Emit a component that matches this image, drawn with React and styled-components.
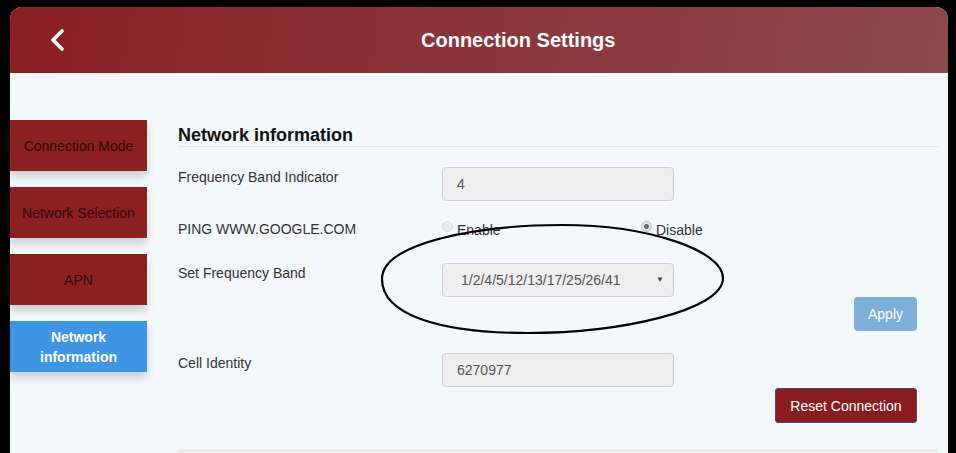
import React, { useState } from 'react';
import styled, { createGlobalStyle } from 'styled-components';

const GlobalStyle = createGlobalStyle`
  html, body {
    margin: 0;
    padding: 0;
    background: #000;
  }
  body {
    font-family: 'Liberation Sans', Arial, sans-serif;
  }
`;

const menu = [
  { id: 'mode', label: 'Connection Mode' },
  { id: 'selection', label: 'Network Selection' },
  { id: 'apn', label: 'APN' },
  { id: 'info', label: 'Network information' },
];

function App() {
  const [active, setActive] = useState('info');
  const [ping, setPing] = useState('disable');

  return (
    <>
      <GlobalStyle />
      <Frame>
        <Screen>
          <Header>
            <BackButton aria-label="Back">
              <svg width="18" height="24" viewBox="0 0 18 24">
                <polyline points="14,3 5,12 14,21" fill="none" stroke="#fff" strokeWidth="3.6" strokeLinecap="round" strokeLinejoin="round" />
              </svg>
            </BackButton>
            <Title>Connection Settings</Title>
          </Header>

          <Body>
            <Sidebar>
              {menu.map((item) => (
                <MenuButton key={item.id} $active={active === item.id} onClick={() => setActive(item.id)}>
                  {item.label}
                </MenuButton>
              ))}
            </Sidebar>

            <Main>
              <Heading>Network information</Heading>

              <Row $top={20}>
                <Label>Frequency Band Indicator</Label>
                <Field>4</Field>
              </Row>

              <Row $top={19}>
                <Label $pad={0}>PING WWW.GOOGLE.COM</Label>
                <RadioGroup>
                  <RadioItem onClick={() => setPing('enable')}>
                    <Radio $checked={ping === 'enable'} />
                    Enable
                  </RadioItem>
                  <RadioItem onClick={() => setPing('disable')}>
                    <Radio $checked={ping === 'disable'} />
                    Disable
                  </RadioItem>
                </RadioGroup>
              </Row>

              <Row $top={25}>
                <Label>Set Frequency Band</Label>
                <Field $select>
                  1/2/4/5/12/13/17/25/26/41
                  <Caret>▼</Caret>
                </Field>
              </Row>

              <ButtonRow>
                <ApplyButton>Apply</ApplyButton>
              </ButtonRow>

              <Row $top={22}>
                <Label>Cell Identity</Label>
                <Field>6270977</Field>
              </Row>

              <ButtonRow $top={1}>
                <ResetButton>Reset Connection</ResetButton>
              </ButtonRow>

              <NextSection />
            </Main>
          </Body>

          <Mark width="360" height="130" viewBox="0 0 360 130">
            <path
              d="M4,58 C4,22 100,4 184,4 C272,4 345,30 345,57 C345,90 240,112 150,112 C62,112 4,94 4,58 Z"
              fill="none"
              stroke="#000"
              strokeWidth="2.2"
            />
          </Mark>
        </Screen>
      </Frame>
    </>
  );
}

const Frame = styled.div`
  height: 453px;
  padding: 7px 8px 0 10px;
  box-sizing: border-box;
  background: #000;
  overflow: hidden;
`;

const Screen = styled.div`
  position: relative;
  height: 100%;
  border-radius: 12px 12px 0 0;
  overflow: hidden;
  background: #f3f8fb;
  display: flex;
  flex-direction: column;
`;

const Header = styled.div`
  height: 66px;
  flex-shrink: 0;
  display: flex;
  align-items: center;
  padding-left: 38px;
  background: linear-gradient(100deg, #8a1e23 0%, #8a3338 45%, #8b4a4c 100%);
`;

const BackButton = styled.button`
  border: none;
  background: none;
  padding: 0;
  width: 18px;
  height: 24px;
  display: flex;
  cursor: pointer;
`;

const Title = styled.h1`
  margin: 0 0 0 355px;
  font-size: 20px;
  font-weight: bold;
  color: #fff;
`;

const Body = styled.div`
  flex: 1;
  display: flex;
  min-height: 0;
`;

const Sidebar = styled.div`
  width: 137px;
  flex-shrink: 0;
  padding-top: 47px;
  display: flex;
  flex-direction: column;
  gap: 16px;
`;

const MenuButton = styled.button`
  height: 51px;
  border: none;
  padding: 0 4px;
  font-family: 'Liberation Sans', Arial, sans-serif;
  font-size: 14px;
  line-height: 20px;
  text-align: center;
  cursor: pointer;
  background: ${(p) => (p.$active ? '#3e95e6' : '#8b2023')};
  color: ${(p) => (p.$active ? '#fff' : '#330809')};
  font-weight: ${(p) => (p.$active ? 'bold' : 'normal')};
  box-shadow: 0 6px 8px rgba(0, 0, 0, 0.16);
  ${(p) => p.$active && 'padding: 0 18px;'}
`;

const Main = styled.div`
  flex: 1;
  margin: 0 10px 0 31px;
  padding-top: 52px;
  display: flex;
  flex-direction: column;
`;

const Heading = styled.h2`
  margin: 0;
  font-size: 18px;
  line-height: 21px;
  font-weight: bold;
  color: #111;
  border-bottom: 1px solid #e3e7ea;
`;

const Row = styled.div`
  display: flex;
  align-items: flex-start;
  margin-top: ${(p) => p.$top || 0}px;
`;

const Label = styled.div`
  width: 264px;
  flex-shrink: 0;
  padding-top: ${(p) => (p.$pad === undefined ? 1 : p.$pad)}px;
  font-size: 14px;
  line-height: 18px;
  color: #333;
`;

const Field = styled.div`
  position: relative;
  width: 232px;
  height: 34px;
  box-sizing: border-box;
  padding-left: ${(p) => (p.$select ? 18 : 14)}px;
  display: flex;
  align-items: center;
  background: #eeeeee;
  border: 1px solid #cfcfcf;
  border-radius: 4px;
  font-size: 14px;
  color: #555;
`;

const Caret = styled.span`
  position: absolute;
  right: 9px;
  top: 11px;
  font-size: 8px;
  color: #444;
`;

const RadioGroup = styled.div`
  display: flex;
  height: 16px;
  align-items: center;
`;

const RadioItem = styled.label`
  width: 199px;
  display: flex;
  align-items: center;
  gap: 4px;
  font-size: 14px;
  color: #333;
  cursor: pointer;
  padding-top: 3px;
`;

const Radio = styled.span`
  width: 11px;
  height: 11px;
  box-sizing: border-box;
  border-radius: 50%;
  border: 1px solid ${(p) => (p.$checked ? '#b9b9b9' : '#dcdcdc')};
  background: ${(p) =>
    p.$checked ? 'radial-gradient(circle, #6f6f6f 0 2.2px, #e6e6e6 2.8px)' : '#ebebeb'};
  margin-top: -6px;
`;

const ButtonRow = styled.div`
  display: flex;
  justify-content: flex-end;
  padding-right: 21px;
  margin-top: ${(p) => p.$top || 0}px;
`;

const ApplyButton = styled.button`
  width: 63px;
  height: 34px;
  border: none;
  border-radius: 4px;
  background: #7eaedc;
  color: #fff;
  font-family: 'Liberation Sans', Arial, sans-serif;
  font-size: 14px;
  cursor: pointer;
`;

const ResetButton = styled.button`
  width: 142px;
  height: 35px;
  border: 1px solid #4d4a72;
  border-radius: 3px;
  background: #8b1c20;
  color: #fff;
  font-family: 'Liberation Sans', Arial, sans-serif;
  font-size: 14px;
  cursor: pointer;
`;

const NextSection = styled.div`
  margin-top: 26px;
  height: 20px;
  flex-shrink: 0;
  background: #ececec;
  border-radius: 3px 0 0 0;
`;

const Mark = styled.svg`
  position: absolute;
  left: 368px;
  top: 214px;
  pointer-events: none;
`;

export default App;
